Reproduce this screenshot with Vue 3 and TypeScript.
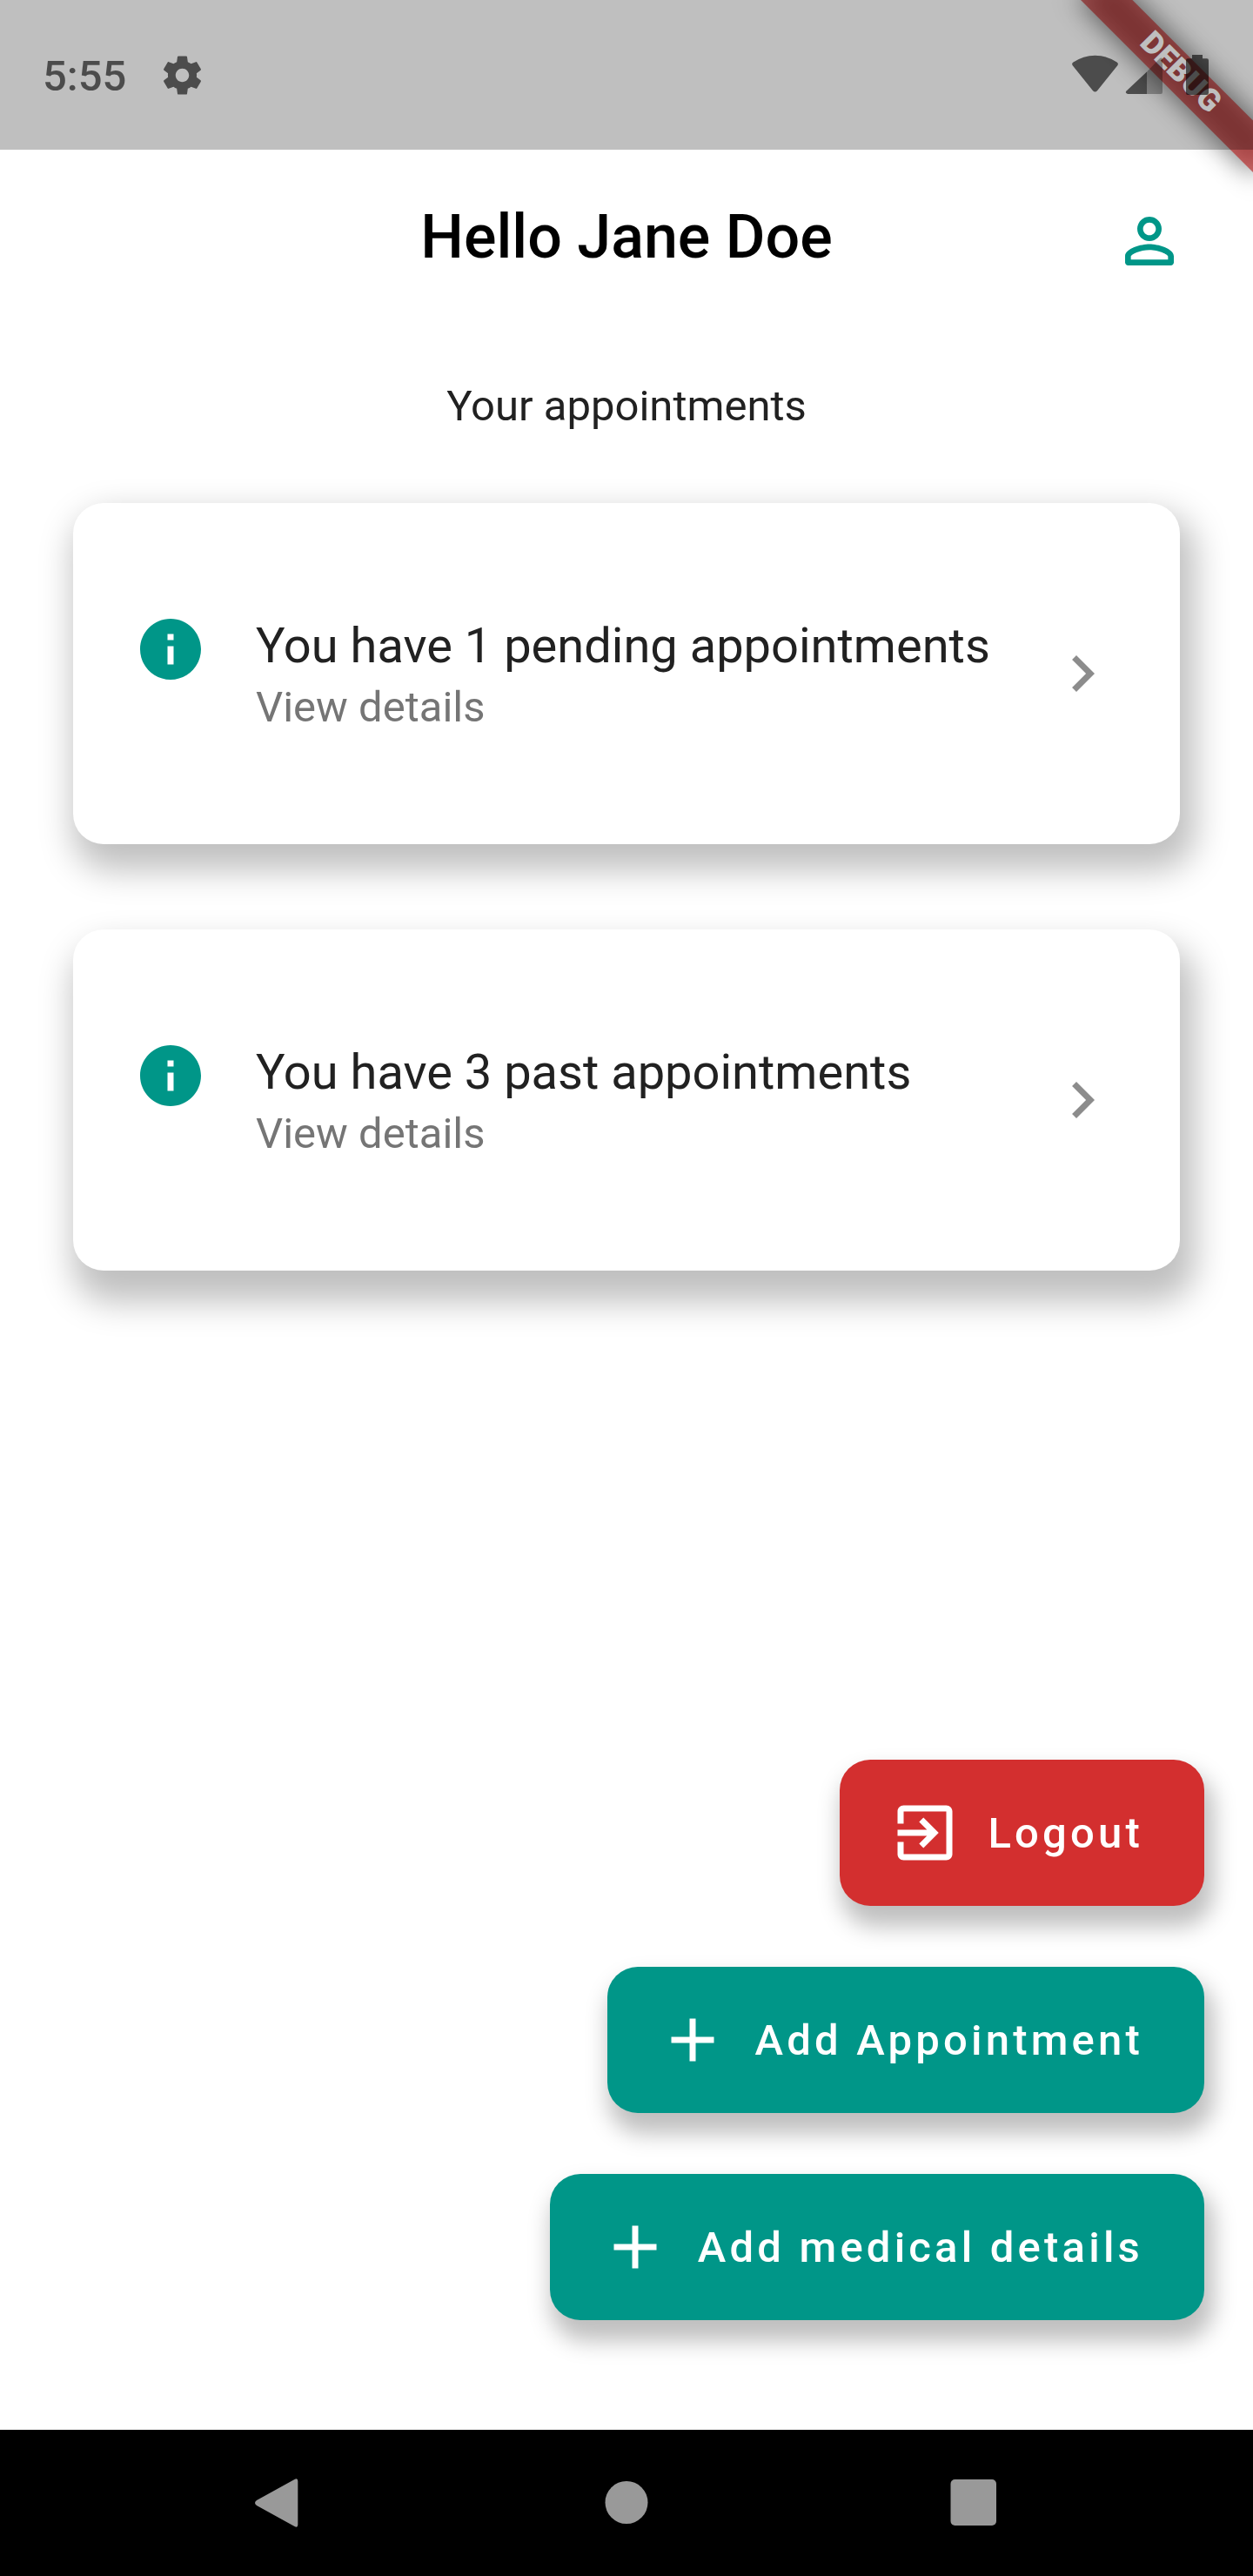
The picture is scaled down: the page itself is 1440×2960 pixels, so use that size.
<script setup lang="ts">
interface Appointment {
  title: string
  subtitle: string
}

interface Action {
  label: string
  icon: 'exit' | 'add'
  danger?: boolean
}

const appointments: Appointment[] = [
  { title: 'You have 1 pending appointments', subtitle: 'View details' },
  { title: 'You have 3 past appointments', subtitle: 'View details' },
]

const actions: Action[] = [
  { label: 'Logout', icon: 'exit', danger: true },
  { label: 'Add Appointment', icon: 'add' },
  { label: 'Add medical details', icon: 'add' },
]

const paths = {
  exit: 'M10.09 15.59L11.5 17l5-5-5-5-1.41 1.41L12.67 11H3v2h9.67l-2.58 2.59zM19 3H5c-1.11 0-2 .9-2 2v4h2V5h14v14H5v-4H3v4c0 1.1.89 2 2 2h14c1.1 0 2-.9 2-2V5c0-1.1-.9-2-2-2z',
  add: 'M19 13h-6v6h-2v-6H5v-2h6V5h2v6h6v2z',
}
</script>

<template>
  <div class="screen">
    <div class="banner">
      <div class="banner-shadow"></div>
      <div class="banner-strip">DEBUG</div>
    </div>

    <header class="status">
      <span class="clock">5:55</span>
      <svg class="gear" viewBox="0 0 24 24">
        <path d="M19.43 12.98c.04-.32.07-.64.07-.98s-.03-.66-.07-.98l2.11-1.65c.19-.15.24-.42.12-.64l-2-3.46c-.12-.22-.39-.3-.61-.22l-2.49 1c-.52-.4-1.08-.73-1.69-.98l-.38-2.65C14.46 2.18 14.25 2 14 2h-4c-.25 0-.46.18-.49.42l-.38 2.65c-.61.25-1.17.59-1.69.98l-2.49-1c-.23-.09-.49 0-.61.22l-2 3.46c-.13.22-.07.49.12.64l2.11 1.65c-.04.32-.07.65-.07.98s.03.66.07.98l-2.11 1.65c-.19.15-.24.42-.12.64l2 3.46c.12.22.39.3.61.22l2.49-1c.52.4 1.08.73 1.69.98l.38 2.65c.03.24.24.42.49.42h4c.25 0 .46-.18.49-.42l.38-2.65c.61-.25 1.17-.59 1.69-.98l2.49 1c.23.09.49 0 .61-.22l2-3.46c.12-.22.07-.49-.12-.64l-2.11-1.65zM12 15.5c-1.93 0-3.5-1.57-3.5-3.5s1.57-3.5 3.5-3.5 3.5 1.57 3.5 3.5-1.57 3.5-3.5 3.5z" />
      </svg>
      <svg class="radios" viewBox="0 0 160 48">
        <path d="M.7 12.2Q-.8 10 1.4 8.6 13 .7 26.5.7T51.6 8.6Q53.8 10 52.3 12.2L29 41.2Q26.5 44 24 41.2Z" />
        <path d="M86 19.5V45H64Q60.5 43.5 62.5 41.5Z" />
        <path opacity=".5" d="M86 45V19.5L100.5 4.5Q104 2 104 6V43Q104 45 102 45Z" />
        <path d="M138 0H150V4.3H155Q157 4.3 157 6.5V43.5Q157 46 155 46H133Q131 46 131 43.5V6.5Q131 4.3 133 4.3H138Z" />
      </svg>
    </header>

    <div class="appbar">
      <h1>Hello Jane Doe</h1>
      <svg class="person" viewBox="0 0 24 24">
        <path d="M12 5.9c1.16 0 2.1.94 2.1 2.1s-.94 2.1-2.1 2.1S9.9 9.16 9.9 8s.94-2.1 2.1-2.1m0 9c2.97 0 6.1 1.46 6.1 2.1v1.1H5.9V17c0-.64 3.13-2.1 6.1-2.1M12 4C9.79 4 8 5.79 8 8s1.79 4 4 4 4-1.79 4-4-1.79-4-4-4zm0 9c-2.67 0-8 1.34-8 4v2c0 .55.45 1 1 1h14c.55 0 1-.45 1-1v-2c0-2.66-5.33-4-8-4z" />
      </svg>
    </div>

    <p class="subtitle">Your appointments</p>

    <main class="cards">
      <article v-for="item in appointments" :key="item.title" class="card">
        <svg class="info" viewBox="0 0 24 24">
          <path d="M12 2C6.48 2 2 6.48 2 12s4.48 10 10 10 10-4.48 10-10S17.52 2 12 2zm1 15h-2v-6h2v6zm0-8h-2V7h2v2z" />
        </svg>
        <div class="card-text">
          <div class="card-title">{{ item.title }}</div>
          <div class="card-sub">{{ item.subtitle }}</div>
        </div>
        <svg class="chevron" viewBox="0 0 24 24">
          <path d="M10 6L8.59 7.41 13.17 12l-4.58 4.59L10 18l6-6z" />
        </svg>
      </article>
    </main>

    <div class="actions">
      <button v-for="a in actions" :key="a.label" class="fab" :class="{ danger: a.danger }">
        <svg viewBox="0 0 24 24"><path :d="paths[a.icon]" /></svg>
        <span>{{ a.label }}</span>
      </button>
    </div>

    <nav class="navbar">
      <svg viewBox="0 0 60 60"><path d="M51.5 3Q55.3 1 55.300 5V55Q55.300 59 51.500 57L8 33Q4 30 8 27Z" /></svg>
      <svg viewBox="0 0 60 60"><circle cx="31" cy="29.5" r="24.5" /></svg>
      <svg viewBox="0 0 60 60"><rect x="2.5" y="3" width="52.5" height="53" rx="5" /></svg>
    </nav>
  </div>
</template>

<style>
body {
  margin: 0;
  background: #fff;
}
</style>

<style scoped>
.screen {
  position: relative;
  width: 1440px;
  height: 2960px;
  overflow: hidden;
  display: flex;
  flex-direction: column;
  background: #fff;
  font-family: Roboto, sans-serif;
  color: #212121;
}

.status {
  position: relative;
  z-index: 2;
  flex: none;
  height: 172px;
  box-sizing: border-box;
  padding: 0 51px 0 49px;
  display: flex;
  align-items: center;
  background: rgba(0, 0, 0, 0.25);
}

.clock {
  font-size: 49px;
  font-weight: 500;
  line-height: 58px;
  padding-top: 4px;
  color: rgba(0, 0, 0, 0.6);
}

.status svg {
  fill: rgba(0, 0, 0, 0.6);
}

.gear {
  width: 53px;
  height: 53px;
  margin-left: 38px;
}

.radios {
  width: 160px;
  height: 48px;
  margin-left: auto;
  margin-right: -3px;
  padding-top: 2px;
}

/* Debug ribbon lies across the top right corner, below the status scrim */
.banner {
  position: absolute;
  z-index: 1;
  top: 98px;
  left: 1300px;
  width: 280px;
  height: 42px;
  transform-origin: 140px -98px;
  transform: rotate(45deg);
}

.banner-shadow {
  position: absolute;
  inset: -3px 0;
  background: rgba(0, 0, 0, 0.5);
  filter: blur(15px);
}

.banner-strip {
  position: absolute;
  inset: 0;
  background: rgba(183, 28, 28, 0.627);
  color: #fff;
  font-size: 35.7px;
  font-weight: 900;
  line-height: 39px;
  text-align: center;
}

.appbar {
  flex: none;
  height: 196px;
  display: grid;
  grid-template-columns: 1fr auto 1fr;
  align-items: center;
}

h1 {
  grid-column: 2;
  margin: 0;
  padding-top: 4px;
  font-size: 70px;
  font-weight: 500;
  line-height: 82px;
  color: #000;
}

.person {
  grid-column: 3;
  justify-self: end;
  width: 84px;
  height: 84px;
  margin: 14px 77px 0 0;
  fill: #009688;
}

.subtitle {
  flex: none;
  margin: 70px 0 0;
  text-align: center;
  font-size: 49px;
  line-height: 58px;
}

.cards {
  flex: none;
  margin-top: 82px;
  padding: 0 84px;
  display: flex;
  flex-direction: column;
  gap: 98px;
}

.card {
  height: 392px;
  box-sizing: border-box;
  padding: 0 70px;
  display: flex;
  align-items: center;
  border-radius: 35px;
  background: #fff;
  box-shadow: 9px 21px 38px 9px rgba(0, 0, 0, 0.25);
}

.card + .card {
  box-shadow: 9px 27px 38px 9px rgba(0, 0, 0, 0.25);
}

.info {
  width: 84px;
  height: 84px;
  margin-bottom: 56px;
  fill: #009688;
}

.card-text {
  flex: 1;
  margin-left: 56px;
  padding-top: 3px;
}

.card-title {
  font-size: 56px;
  line-height: 66px;
}

.card-sub {
  margin-top: 9px;
  font-size: 49px;
  line-height: 58px;
  color: #757575;
}

.chevron {
  width: 84px;
  height: 84px;
  fill: #8c8c8c;
}

.actions {
  flex: 1;
  padding: 0 56px 126px 0;
  display: flex;
  flex-direction: column;
  justify-content: flex-end;
  align-items: flex-end;
  gap: 70px;
}

.fab {
  height: 168px;
  padding: 0 70px 0 56px;
  border: 0;
  border-radius: 35px;
  display: flex;
  align-items: center;
  gap: 30px;
  background: #009688;
  color: #fff;
  font: 500 49px/58px Roboto, sans-serif;
  letter-spacing: 4.2px;
  white-space: nowrap;
  box-shadow: 6px 19px 26px 5px rgba(0, 0, 0, 0.25);
}

.fab.danger {
  background: #d32f2f;
}

.fab svg {
  width: 84px;
  height: 84px;
  fill: currentColor;
}

.fab span {
  padding-top: 2px;
}

.navbar {
  flex: none;
  height: 168px;
  box-sizing: border-box;
  padding: 0 290px 0 287px;
  display: flex;
  justify-content: space-between;
  align-items: center;
  background: #000;
}

.navbar svg {
  width: 60px;
  height: 60px;
  fill: #999;
}
</style>
